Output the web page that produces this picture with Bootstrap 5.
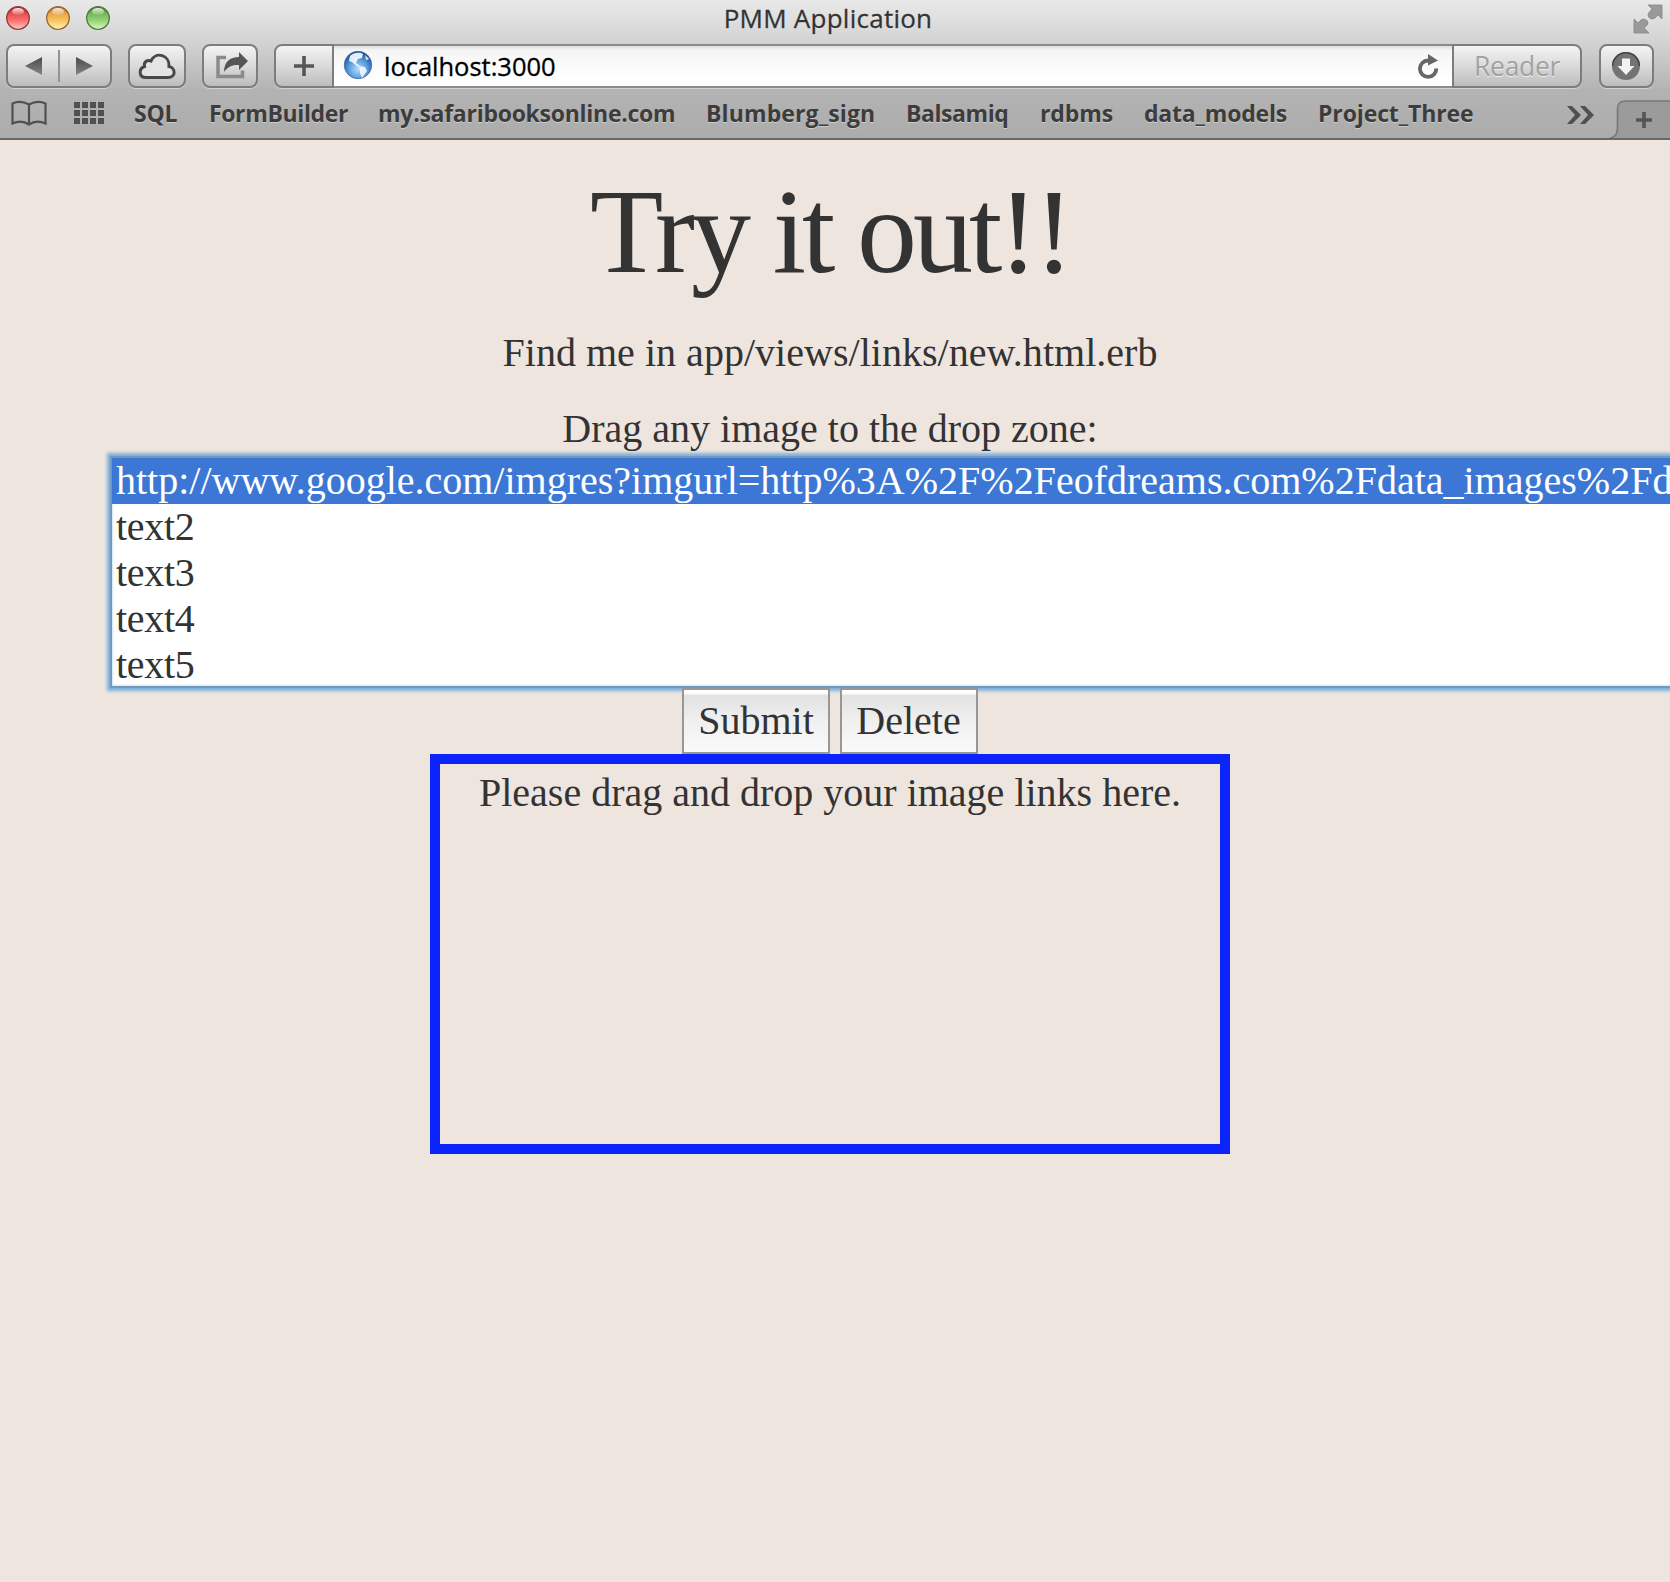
<!DOCTYPE html>
<html lang="en">
<head>
<meta charset="utf-8">
<title>PMM Application</title>
<link rel="stylesheet" href="https://cdn.jsdelivr.net/npm/bootstrap@5.3.0/dist/css/bootstrap.min.css">
<style>
html,body{height:100%;overflow:hidden}
body{background:#eee5df;color:#333;font-family:"Liberation Serif",serif;font-size:40px}
.chrome{height:140px;background:linear-gradient(#e9e9e9 0,#d2d2d2 44px,#b3b3b3 90px,#acacac 138px);border-bottom:2px solid #686868;font-family:"Open Sans","Noto Sans",sans-serif;color:#3a3a3a}
.titlebar{height:44px;padding:0 5px 0 6px}
.titlebar svg,.tools svg,.marks svg{display:block;flex:none}
.wintitle{font-size:26px;line-height:37px;height:44px;margin-right:89px;letter-spacing:.25px;text-shadow:0 1px 0 #fff8;white-space:nowrap;color:#333;-webkit-text-stroke:.3px #333}
.tools{height:44px;padding-left:6px;color:#000}
.tbtn{height:44px;border:2px solid #7d7d7d;border-radius:8px;background:linear-gradient(#f4f4f4,#dadada 50%,#bcbcbc);box-shadow:0 1px 0 #d4d4d4;flex:none}
.w-nav{width:106px}
.w-cloud{width:58px}
.w-share{width:56px}
.w-plus{width:60px}
.w-read{width:130px;padding-left:20px}
.w-down{width:55px;margin-left:17px}
.gap-l{margin-left:16px}
.addr{width:1118px;height:44px;border:2px solid #8c8c8c;border-left:0;border-right:0;background:linear-gradient(#ddd 0,#f5f5f5 4px,#fff 34px);font-size:25.5px;line-height:41px;letter-spacing:-.02px;box-shadow:0 1px 0 #d4d4d4;-webkit-text-stroke:.3px #000}
.urltext{margin-left:4px}
.reload{margin-right:11px}
.reader{font-size:26.5px;line-height:41px;letter-spacing:-.3px;color:#a2a2a2;text-shadow:0 1px 0 #eee}
.marks{height:50px;font-weight:700;font-size:23px;line-height:50px;color:#3c3c3c;text-shadow:0 1px 0 #ccc;letter-spacing:-.2px}
.marks a{color:inherit;text-decoration:none;white-space:nowrap;flex:none}
.m1{width:75px}
.m2{width:169px;letter-spacing:-.37px}
.m3{width:328px;letter-spacing:-.27px}
.m4{width:200px;letter-spacing:.12px}
.m5{width:134px;letter-spacing:-.42px}
.m6{width:104px;letter-spacing:-.12px}
.m7{width:174px}
.m8{width:248px;letter-spacing:-.12px}
.page{width:1660px;padding-top:32px}
.page h1{font-size:120px;line-height:120px;letter-spacing:-4.1px;margin:0 0 33px;font-weight:400}
.page p{line-height:56px;margin:0 0 20px;letter-spacing:.025px}
.hint{line-height:56px}
.linkbox{margin:-1px -20px 0 110px;height:232px;border:2px solid #7299ba;border-right:0;overflow:hidden;background:#fff;box-shadow:0 0 3px 3px #7fb0dc,inset 0 0 2px 1px #cfe4f5}
.linkbox div{line-height:46px;height:46px;padding-left:4px;white-space:nowrap;letter-spacing:-.3px}
.linkbox .picked{background:#3d77d5;color:#fff;letter-spacing:0}
.acts{gap:10px;height:66px}
.act{height:66px;border:2px solid #979797;background:linear-gradient(#fff 0,#fbfbfb 4px,#e2e2e2 5px,#f0f0f0 32px,#fafafa);color:#333;font:40px/62px "Liberation Serif",serif;padding:0}
.w-sub{width:148px}
.w-del{width:138px;padding-right:1px}
.drop{width:800px;height:400px;border:10px solid #0b24fb;line-height:58px}
</style>
</head>
<body>
<header class="chrome">
 <div class="titlebar d-flex justify-content-between">
  <svg width="106" height="36" viewBox="0 0 106 36">
   <defs>
    <linearGradient id="r" x2="0" y2="1"><stop stop-color="#a8262a"/><stop offset=".3" stop-color="#e8494b"/><stop offset=".6" stop-color="#f9706e"/><stop offset="1" stop-color="#fdc9c4"/></linearGradient>
    <linearGradient id="y" x2="0" y2="1"><stop stop-color="#b3651c"/><stop offset=".3" stop-color="#eda544"/><stop offset=".6" stop-color="#f8c25f"/><stop offset="1" stop-color="#fdf6b0"/></linearGradient>
    <linearGradient id="g" x2="0" y2="1"><stop stop-color="#3b7a2c"/><stop offset=".3" stop-color="#72b757"/><stop offset=".6" stop-color="#93d277"/><stop offset="1" stop-color="#dcf8bd"/></linearGradient>
    <linearGradient id="sh" x2="0" y2="1"><stop stop-color="#fff" stop-opacity=".9"/><stop offset="1" stop-color="#fff" stop-opacity=".1"/></linearGradient>
   </defs>
   <circle cx="12" cy="18" r="11.3" fill="url(#r)" stroke="#94383a" stroke-width="1.3"/><ellipse cx="12" cy="11.5" rx="6" ry="3.600" fill="url(#sh)"/>
   <circle cx="52" cy="18" r="11.3" fill="url(#y)" stroke="#97652e" stroke-width="1.3"/><ellipse cx="52" cy="11.5" rx="6" ry="3.600" fill="url(#sh)"/>
   <circle cx="92" cy="18" r="11.3" fill="url(#g)" stroke="#4c7a3c" stroke-width="1.3"/><ellipse cx="92" cy="11.5" rx="6" ry="3.600" fill="url(#sh)"/>
  </svg>
  <div class="wintitle">PMM Application</div>
  <svg width="32" height="36" viewBox="1633 0 32 36" fill="#9a9a9a" stroke="#858585" stroke-width=".8"><path d="M1648 5h14v14l-4-4q-3 4-6 4-4-1-4-4 0-2 4-6z"/><path d="M1634 19l4 4q3-4 6-4 4 1 4 4 0 2-4 5l5 5h-15z"/></svg>
 </div>
 <div class="tools d-flex">
  <div class="tbtn w-nav"><svg width="102" height="40" viewBox="8 46 102 40"><defs><linearGradient id="d" x2="0" y2="1"><stop stop-color="#4a4a4a"/><stop offset="1" stop-color="#858585"/></linearGradient></defs><path d="M25 66l17-9v18zM93 66l-17-9v18z" fill="url(#d)"/><path d="M59 50v32" stroke="#929292" stroke-width="2"/></svg></div>
  <div class="tbtn w-cloud gap-l"><svg width="54" height="40" viewBox="130 46 54 40"><path d="M146 77.500h22c8 0 8-9.500 1-11c1-11-13-16-18-5.500c-4-1.500-7.500 1-6.500 5.500c-6.500 2.500-5.500 11 1.500 11z" fill="#e4e4e4" stroke="#484848" stroke-width="3"/></svg></div>
  <div class="tbtn w-share gap-l"><svg width="52" height="40" viewBox="204 46 52 40"><path d="M226 57.500h-8v19h24.500v-6" fill="none" stroke="#8a8a8a" stroke-width="3.500"/><path d="M239 52l9 9-9 9v-5c-7-.5-11 1.500-15 7c0-10 6-15 15-15z" fill="#555"/></svg></div>
  <div class="tbtn rounded-end-0 w-plus gap-l"><svg width="56" height="40" viewBox="276 46 56 40"><path d="M304 56v20M294 66h20" stroke="#555" stroke-width="3.600"/></svg></div>
  <div class="addr d-flex align-items-start">
   <svg width="46" height="40" viewBox="334 46 46 40"><defs><radialGradient id="gl" cx=".5" cy=".65" r=".6"><stop stop-color="#b5dcfa"/><stop offset=".55" stop-color="#5e9fdf"/><stop offset="1" stop-color="#1d559f"/></radialGradient></defs><circle cx="358" cy="65" r="13.700" fill="url(#gl)" stroke="#36699f" stroke-width=".8"/><path d="M350 56c4-4 10-4 13-2l-1 4-4 1-2 4 4 3-2 1-6-5-3-1z M359 66l6 1 2 4-5 7-2-5z M365 55l4 4-3 1z" fill="#f2f8fd" opacity=".93"/></svg>
   <span class="urltext">localhost:3000</span>
   <svg class="ms-auto reload" width="26" height="40" viewBox="1415 46 26 40"><path d="M1428 60.500a8.200 8.200 0 1 0 8.300 8" fill="none" stroke="#666" stroke-width="3.800"/><path d="M1428 54l10 6.500-10 5z" fill="#666"/></svg>
  </div>
  <div class="tbtn reader rounded-start-0 w-read">Reader</div>
  <div class="tbtn w-down"><svg width="51" height="40" viewBox="1601 46 51 40"><circle cx="1626" cy="66" r="14" fill="#737373"/><path d="M1612.700 66a13.300 13.300 0 0 1 26.600 0" fill="none" stroke="#444" stroke-width="1.500"/><path d="M1622 58.500h8v7.500h4.500l-8.500 9-8.500-9h4.500z" fill="#f2f2f2"/></svg></div>
 </div>
 <nav class="marks d-flex">
  <svg width="134" height="50" viewBox="0 88 134 50"><path d="M12.500 123.500V103.500q8-3.500 16.500 1q8.500-4.500 16.500-1V123.500q-9-4-16.500 1q-7.500-5-16.500-1zM29 104v20" fill="none" stroke="#505050" stroke-width="2.200"/><g fill="#505050"><path d="M74 102h6v6h-6zm8 0h6v6h-6zm8 0h6v6h-6zm8 0h6v6h-6zM74 110h6v6h-6zm8 0h6v6h-6zm8 0h6v6h-6zm8 0h6v6h-6zM74 118h6v6h-6zm8 0h6v6h-6zm8 0h6v6h-6zm8 0h6v6h-6z"/></g></svg>
  <a class="m1">SQL</a><a class="m2">FormBuilder</a><a class="m3">my.safaribooksonline.com</a><a class="m4">Blumberg_sign</a><a class="m5">Balsamiq</a><a class="m6">rdbms</a><a class="m7">data_models</a><a class="m8">Project_Three</a>
  <svg width="104" height="50" viewBox="1566 88 104 50"><path d="M1567 106h5l9 9-9 9h-5l8-9zM1580 106h5l9 9-9 9h-5l8-9z" fill="#505050"/><path d="M1610 138q7-1 7.500-9v-20q0-8 8-8H1671v37z" fill="#9b9b9b"/><path d="M1610 138q7-1 7.500-9v-20q0-8 8-8H1671" fill="none" stroke="#777" stroke-width="1.600"/><path d="M1644 112v16M1636 120h16" stroke="#555" stroke-width="3.600"/></svg>
 </nav>
</header>
<main class="page">
 <h1 class="text-center">Try it out!!</h1>
 <p class="text-center">Find me in app/views/links/new.html.erb</p>
 <div class="hint text-center">Drag any image to the drop zone:</div>
 <div class="linkbox"><div class="picked">http://www.google.com/imgres?imgurl=http%3A%2F%2Feofdreams.com%2Fdata_images%2Fd</div><div>text2</div><div>text3</div><div>text4</div><div>text5</div></div>
 <div class="acts d-flex justify-content-center position-relative"><button class="act w-sub">Submit</button><button class="act w-del">Delete</button></div>
 <div class="drop mx-auto text-center">Please drag and drop your image links here.</div>
</main>
<script src="https://cdn.jsdelivr.net/npm/bootstrap@5.3.0/dist/js/bootstrap.bundle.min.js"></script>
</body>
</html>
